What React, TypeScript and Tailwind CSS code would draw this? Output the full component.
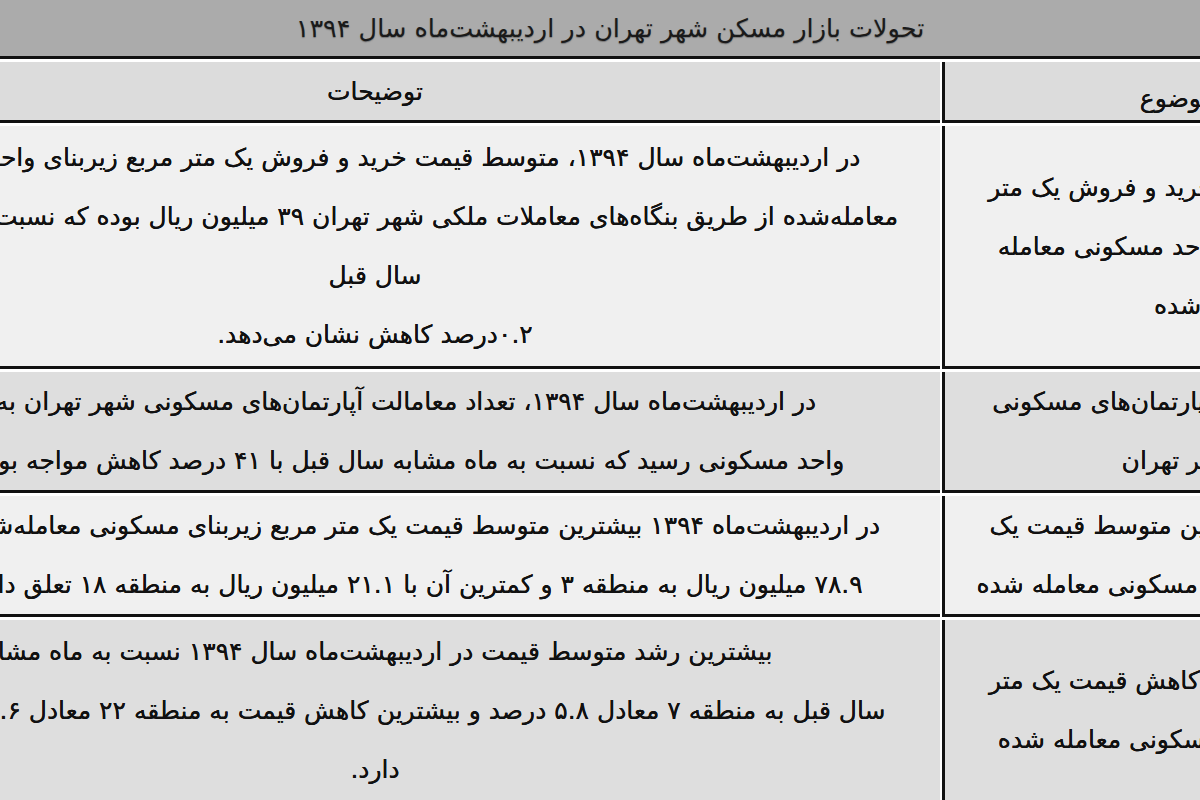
import React from "react";

type Row = { bg: string; h: string; left: string[]; right: string[] };

const rows: Row[] = [
  {
    bg: "bg-[#f0f0f0]",
    h: "h-[240px]",
    left: [
      "در اردیبهشت‌ماه سال ۱۳۹۴، متوسط قیمت خرید و فروش یک متر مربع زیربنای واحد مسکونی",
      "معامله‌شده از طریق بنگاه‌های معاملات ملکی شهر تهران ۳۹ میلیون ریال بوده که نسبت به ماه مشابه",
      "سال قبل",
      "۰.۲درصد کاهش نشان می‌دهد.",
    ],
    right: ["متوسط قیمت خرید و فروش یک متر", "مربع زیربنای واحد مسکونی معامله", "شده"],
  },
  {
    bg: "bg-[#dedede]",
    h: "h-[118px]",
    left: [
      "در اردیبهشت‌ماه سال ۱۳۹۴، تعداد معامالت آپارتمان‌های مسکونی شهر تهران به ۷۸۹۴",
      "واحد مسکونی رسید که نسبت به ماه مشابه سال قبل با ۴۱ درصد کاهش مواجه بوده است.",
    ],
    right: ["تعداد معاملات آپارتمان‌های مسکونی", "شهر تهران"],
  },
  {
    bg: "bg-[#f0f0f0]",
    h: "h-[118px]",
    left: [
      "در اردیبهشت‌ماه ۱۳۹۴ بیشترین متوسط قیمت یک متر مربع زیربنای مسکونی معامله‌شده به میزان",
      "۷۸.۹ میلیون ریال به منطقه ۳ و کمترین آن با ۲۱.۱ میلیون ریال به منطقه ۱۸ تعلق داشته است.",
    ],
    right: ["بیشترین و کمترین متوسط قیمت یک", "متر مربع زیربنای مسکونی معامله شده"],
  },
  {
    bg: "bg-[#dedede]",
    h: "h-[180px]",
    left: [
      "بیشترین رشد متوسط قیمت در اردیبهشت‌ماه سال ۱۳۹۴ نسبت به ماه مشابه",
      "سال قبل به منطقه ۷ معادل ۵.۸ درصد و بیشترین کاهش قیمت به منطقه ۲۲ معادل ۴.۶ درصد تعلق",
      "دارد.",
    ],
    right: ["بیشترین رشد و کاهش قیمت یک متر", "مربع زیربنای مسکونی معامله شده"],
  },
];

function Line({ children }: { children: React.ReactNode }) {
  return (
    <div dir="rtl" className="whitespace-nowrap leading-[59px]">
      {children}
    </div>
  );
}

export default function App() {
  return (
    <div className="w-[1200px] h-[800px] overflow-hidden bg-white font-['DejaVu_Sans',sans-serif] text-[25px] text-[#111] [text-shadow:0_0_0.6px_#000]">
      <div className="w-[1600px] ml-[-190px] flex flex-col gap-[3px] bg-white">
        {/* Title */}
        <div className="h-[59px] bg-[#ababab] border-b-[3px] border-[#111] flex items-center justify-center">
          <div dir="rtl" className="whitespace-nowrap text-[25.5px] text-[#1a1a1a] [text-shadow:0_1px_1px_#777]">
            تحولات بازار مسکن شهر تهران در اردیبهشت‌ماه سال ۱۳۹۴
          </div>
        </div>
        {/* Header */}
        <div className="flex gap-[2px]">
          <div className="w-[1130px] h-[61px] bg-[#dcdcdc] border-b-[3px] border-[#111] flex items-center justify-center">
            <Line>توضیحات</Line>
          </div>
          <div className="w-[468px] h-[61px] bg-[#dcdcdc] border-b-[3px] border-l-[3px] border-[#111] flex items-center justify-center pt-[14px]">
            <Line>موضوع</Line>
          </div>
        </div>
        {rows.map((r, i) => (
          <div key={i} className="flex gap-[2px]">
            <div
              className={`w-[1130px] ${r.h} ${r.bg} border-b-[3px] border-[#111] flex flex-col items-center justify-center box-content`}
            >
              {r.left.map((t, j) => (
                <Line key={j}>{t}</Line>
              ))}
            </div>
            <div
              className={`w-[465px] ${r.h} ${r.bg} border-b-[3px] border-l-[3px] border-[#111] flex flex-col items-center justify-center box-content`}
            >
              {r.right.map((t, j) => (
                <Line key={j}>{t}</Line>
              ))}
            </div>
          </div>
        ))}
      </div>
    </div>
  );
}
